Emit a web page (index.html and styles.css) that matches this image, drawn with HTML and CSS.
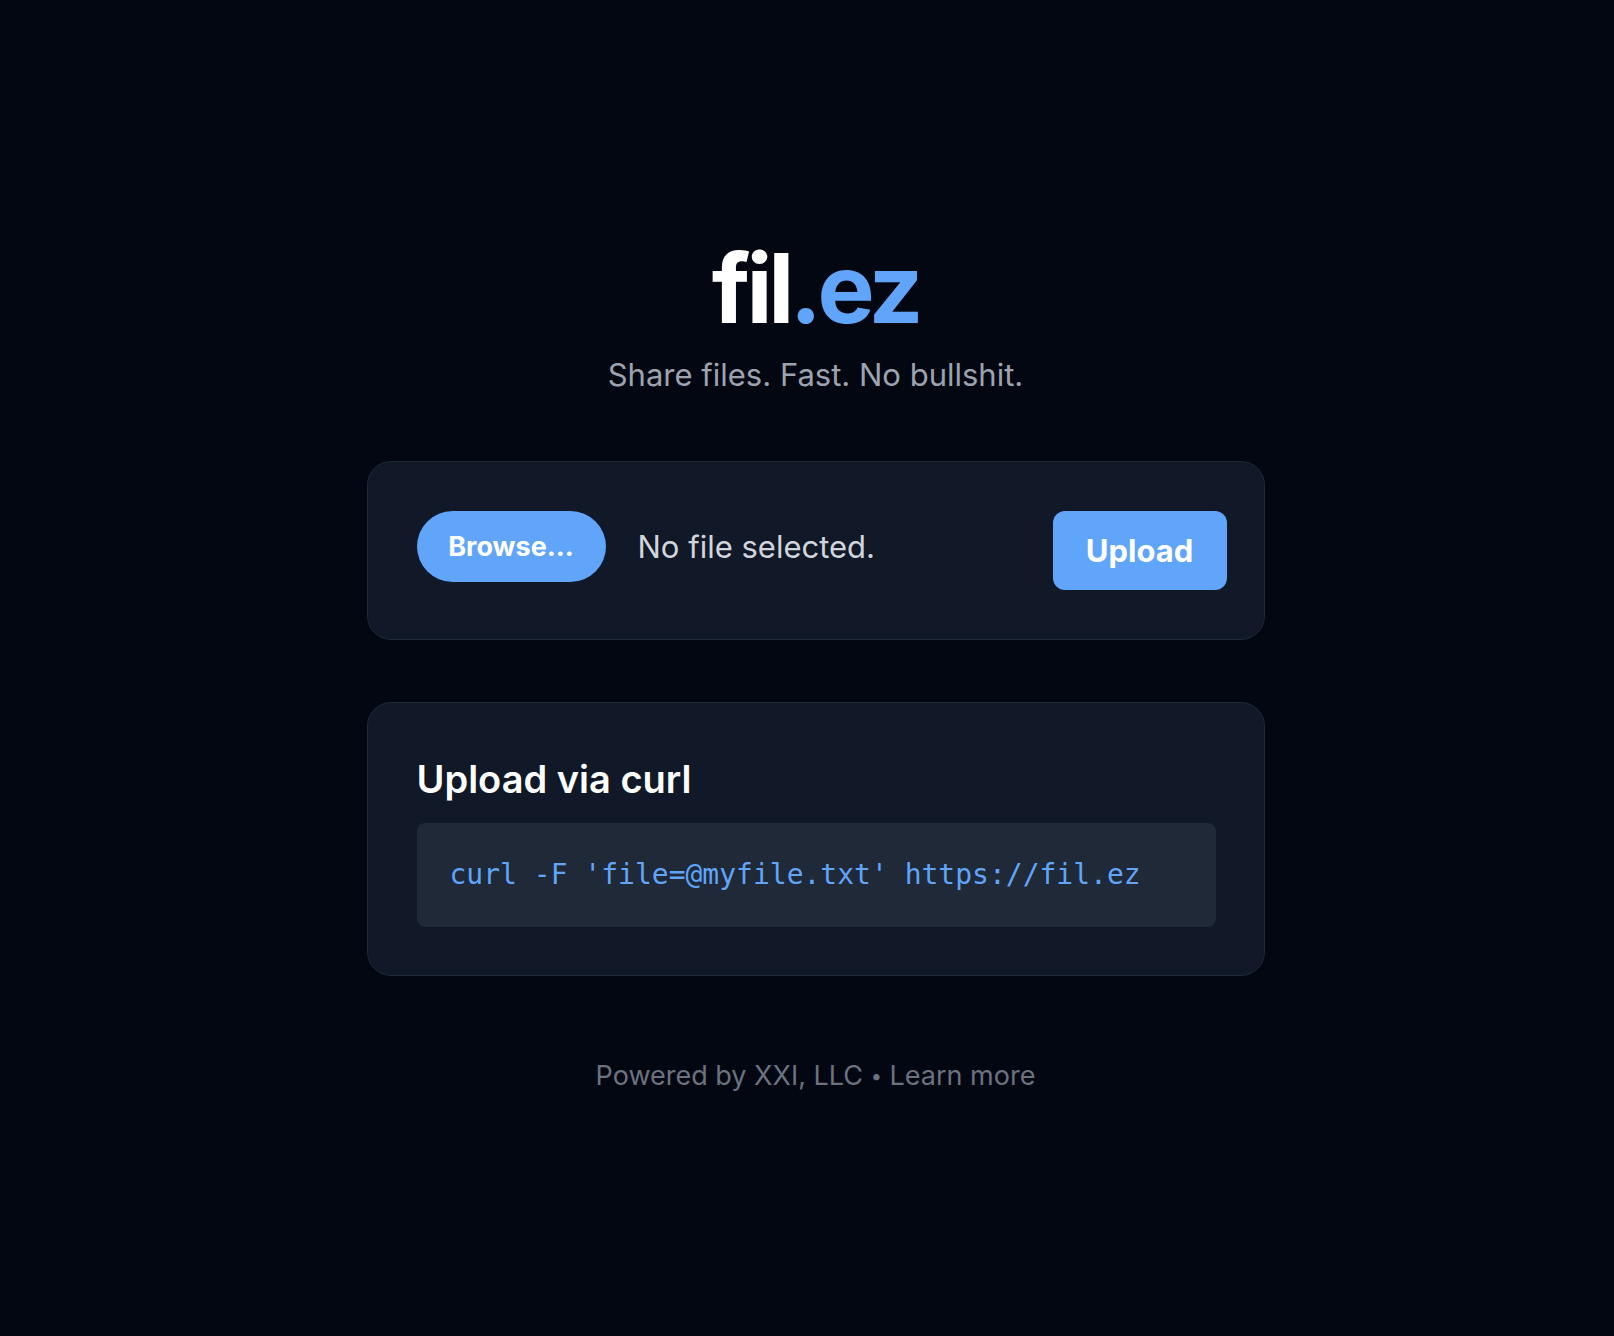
FILE: index.html
```html
<!DOCTYPE html>
<html lang="en">
<head>
<meta charset="utf-8">
<title>fil.ez</title>
<link rel="stylesheet" href="styles.css">
</head>
<body>
<main class="page">
  <header class="hero">
    <h1 class="logo">fil<span class="logo-accent">.ez</span></h1>
    <p class="tagline">Share files. Fast. No bullshit.</p>
  </header>

  <section class="card upload-card">
    <div class="file-picker">
      <span class="browse-btn">Browse...</span>
      <span class="file-status">No file selected.</span>
    </div>
    <button class="upload-btn" type="button">Upload</button>
  </section>

  <section class="card curl-card">
    <h2 class="curl-title">Upload via curl</h2>
    <pre class="code-block"><code>curl -F 'file=@myfile.txt' https://fil.ez</code></pre>
  </section>

  <footer class="footer">Powered by XXI, LLC <span class="dot">•</span> Learn more</footer>
</main>
</body>
</html>
```

FILE: styles.css
```css
* { box-sizing: border-box; }

html, body {
  margin: 0;
  padding: 0;
  background: #030712;
}

body {
  font-family: "Inter", "Noto Sans", sans-serif;
  color: #ffffff;
  min-height: 1336px;
}

.page {
  display: flex;
  flex-direction: column;
  align-items: center;
  padding: 240px 0 0 17px;
}

.hero {
  display: flex;
  flex-direction: column;
  align-items: center;
}

.logo {
  margin: 0;
  font-size: 96px;
  line-height: 96px;
  font-weight: 700;
  letter-spacing: -0.045em;
  color: #ffffff;
}

.logo-accent { color: #60a5fa; }

.tagline {
  margin: 21px 0 0;
  font-size: 31px;
  line-height: 36px;
  color: #9ca3af;
}

.card {
  width: 898px;
  background: #111827;
  border: 1px solid #1f2937;
  border-radius: 24px;
}

.upload-card {
  margin-top: 68px;
  display: flex;
  justify-content: space-between;
  align-items: flex-start;
  padding: 49px 37px 49px 49px;
}

.file-picker {
  display: flex;
  align-items: center;
  gap: 32px;
}

.browse-btn {
  display: inline-flex;
  align-items: center;
  justify-content: center;
  width: 189px;
  height: 71px;
  border-radius: 999px;
  background: #60a5fa;
  color: #ffffff;
  font-size: 27px;
  font-weight: 700;
}

.file-status {
  font-size: 31px;
  color: #d1d5db;
}

.upload-btn {
  width: 174px;
  height: 79px;
  border: none;
  border-radius: 12px;
  background: #60a5fa;
  color: #ffffff;
  font-family: inherit;
  font-size: 31px;
  font-weight: 700;
  padding: 0;
}

.curl-card {
  margin-top: 62px;
  padding: 48px 48px 48px 49px;
}

.curl-title {
  margin: 0 0 16px;
  font-size: 38px;
  line-height: 56px;
  font-weight: 600;
  color: #ffffff;
}

.code-block {
  margin: 0;
  background: #1f2937;
  border-radius: 8px;
  padding: 32px 33px;
  font-family: "DejaVu Sans Mono", "Liberation Mono", monospace;
  font-size: 28px;
  line-height: 40px;
  color: #60a5fa;
}

.footer {
  margin-top: 82px;
  font-size: 27px;
  line-height: 36px;
  color: #6b7280;
}

.dot {
  font-size: 20px;
  vertical-align: 2px;
}
```
